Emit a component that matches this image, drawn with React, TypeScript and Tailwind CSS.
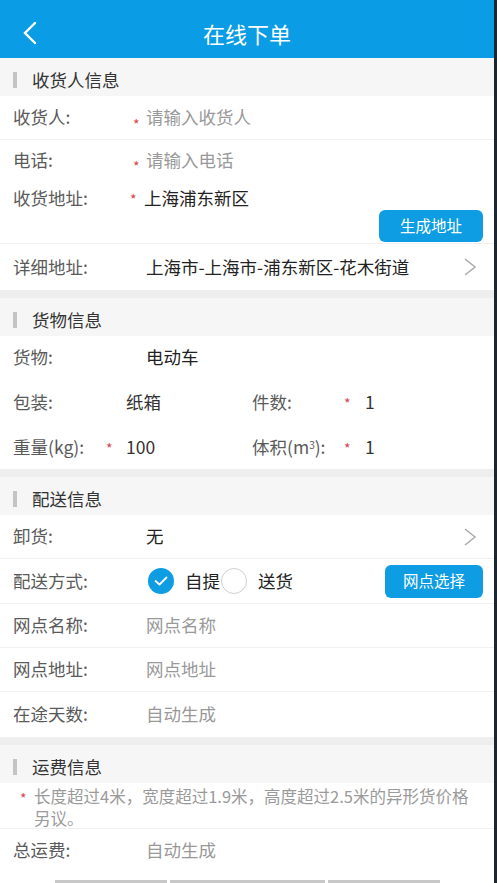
import React from "react";

const font = { fontFamily: '"Noto Sans CJK SC", "Noto Sans", sans-serif' };

const LABEL = "text-[17.5px] text-[#5a5a5a] shrink-0";
const VALUE = "text-[17.5px] text-[#222]";
const HINT = "text-[17.5px] text-[#999]";

function Star({ className = "" }: { className?: string }) {
  return <span className={`text-[#d9434e] text-[14px] leading-none shrink-0 ${className}`}>*</span>;
}

function SectionHeader({ title, gap = true }: { title: string; gap?: boolean }) {
  return (
    <div className="flex flex-col shrink-0">
      {gap && <div className="h-[8px] bg-[#eeeeee]" />}
      <div className="h-[38px] bg-[#f6f6f6] flex items-center pl-[13px] pt-[6px]">
        <div className="w-[4px] h-[16px] bg-[#c4c4c4]" />
        <span className="ml-[15px] text-[17.5px] text-[#333]">{title}</span>
      </div>
    </div>
  );
}

function Chevron() {
  return (
    <svg width="14" height="20" viewBox="0 0 14 20" className="ml-auto mr-[17px] shrink-0">
      <path d="M2 2 L12 10 L2 18" fill="none" stroke="#aaaaaa" strokeWidth="1.5" />
    </svg>
  );
}

function Divider() {
  return <div className="h-px bg-[#f0f0f0] shrink-0" />;
}

function Row({ h, children }: { h: string; children: React.ReactNode }) {
  return <div className={`${h} flex items-center pl-[13px] shrink-0`}>{children}</div>;
}

export default function App() {
  return (
    <div className="flex w-[497px] h-[883px] overflow-hidden bg-white" style={font}>
      <div className="w-[494px] flex flex-col">
        {/* Top bar */}
        <div className="h-[58px] bg-[#0a9ce5] flex items-center pt-[8px] shrink-0">
          <div className="w-[60px] pl-[21px] flex items-center">
            <svg width="18" height="24" viewBox="0 0 18 24">
              <path d="M14 2 L4 12 L14 22" fill="none" stroke="#ffffff" strokeWidth="2.4" strokeLinecap="round" />
            </svg>
          </div>
          <span className="flex-1 text-center text-white text-[22px]">在线下单</span>
          <div className="w-[60px]" />
        </div>

        {/* 收货人信息 */}
        <SectionHeader title="收货人信息" gap={false} />
        <Row h="h-[43px]">
          <span className={`${LABEL} w-[120px]`}>收货人:</span>
          <Star className="w-[13px] mt-[12px]" />
          <span className={HINT}>请输入收货人</span>
        </Row>
        <Divider />
        <Row h="h-[40px]">
          <span className={`${LABEL} w-[120px]`}>电话:</span>
          <Star className="w-[13px] mt-[12px]" />
          <span className={HINT}>请输入电话</span>
        </Row>
        <div className="h-[63px] flex flex-col shrink-0">
          <div className="flex items-center pl-[13px] h-[36px]">
            <span className={`${LABEL} w-[117px]`}>收货地址:</span>
            <Star className="w-[14px] mt-[2px]" />
            <span className={VALUE}>上海浦东新区</span>
          </div>
          <div className="flex justify-end pr-[11px] mt-[-6px]">
            <div className="w-[104px] h-[32px] bg-[#0e9de2] rounded-[6px] flex items-center justify-center">
              <span className="text-white text-[15.5px]">生成地址</span>
            </div>
          </div>
        </div>
        <Divider />
        <Row h="h-[46px]">
          <span className={`${LABEL} w-[133px]`}>详细地址:</span>
          <span className={VALUE}>上海市-上海市-浦东新区-花木街道</span>
          <Chevron />
        </Row>

        {/* 货物信息 */}
        <SectionHeader title="货物信息" />
        <Row h="h-[43px]">
          <span className={`${LABEL} w-[133px]`}>货物:</span>
          <span className={VALUE}>电动车</span>
        </Row>
        <Row h="h-[46px]">
          <span className={`${LABEL} w-[113px]`}>包装:</span>
          <span className={`${VALUE} text-[#333] w-[126px]`}>纸箱</span>
          <span className={`${LABEL} w-[92px]`}>件数:</span>
          <Star className="w-[21px] mt-[2px]" />
          <span className={`${VALUE} text-[#333]`}>1</span>
        </Row>
        <Row h="h-[44px]">
          <span className={`${LABEL} w-[93px]`}>重量(kg):</span>
          <Star className="w-[20px] mt-[2px]" />
          <span className={`${VALUE} text-[#333] w-[126px]`}>100</span>
          <span className={`${LABEL} w-[92px]`}>
            体积(m<sup className="text-[10px]">3</sup>):
          </span>
          <Star className="w-[21px] mt-[2px]" />
          <span className={`${VALUE} text-[#333]`}>1</span>
        </Row>

        {/* 配送信息 */}
        <SectionHeader title="配送信息" />
        <Row h="h-[43px]">
          <span className={`${LABEL} w-[133px]`}>卸货:</span>
          <span className={VALUE}>无</span>
          <Chevron />
        </Row>
        <Divider />
        <Row h="h-[44px]">
          <span className={`${LABEL} w-[135px]`}>配送方式:</span>
          <div className="w-[26px] h-[26px] rounded-full bg-[#0e9de2] flex items-center justify-center shrink-0">
            <svg width="14" height="10" viewBox="0 0 14 10">
              <path d="M1.5 5 L5.5 8.5 L12.5 1.5" fill="none" stroke="#ffffff" strokeWidth="1.8" strokeLinecap="round" strokeLinejoin="round" />
            </svg>
          </div>
          <span className={`${VALUE} ml-[11px]`}>自提</span>
          <div className="w-[26px] h-[26px] rounded-full border border-[#cfcfcf] bg-white ml-[1px] shrink-0" />
          <span className={`${VALUE} ml-[11px]`}>送货</span>
          <div className="ml-auto mr-[11px] w-[98px] h-[33px] bg-[#0e9de2] rounded-[6px] flex items-center justify-center">
            <span className="text-white text-[15.5px]">网点选择</span>
          </div>
        </Row>
        <Divider />
        <Row h="h-[43px]">
          <span className={`${LABEL} w-[133px]`}>网点名称:</span>
          <span className={HINT}>网点名称</span>
        </Row>
        <Divider />
        <Row h="h-[43px]">
          <span className={`${LABEL} w-[133px]`}>网点地址:</span>
          <span className={HINT}>网点地址</span>
        </Row>
        <Divider />
        <Row h="h-[45px]">
          <span className={`${LABEL} w-[133px]`}>在途天数:</span>
          <span className={HINT}>自动生成</span>
        </Row>

        {/* 运费信息 */}
        <SectionHeader title="运费信息" />
        <div className="flex pl-[20px] pr-[22px] pt-[2px] h-[45px] shrink-0">
          <Star className="w-[14px] mt-[6px]" />
          <p className="text-[16.5px] leading-[22px] text-[#9a9a9a]">
            长度超过4米，宽度超过1.9米，高度超过2.5米的异形货价格另议。
          </p>
        </div>
        <Divider />
        <Row h="h-[43px]">
          <span className={`${LABEL} w-[133px]`}>总运费:</span>
          <span className={HINT}>自动生成</span>
        </Row>
        <div className="flex-1 flex items-end pl-[55px] gap-[3px]">
          <div className="w-[112px] h-[3px] bg-[#c8c8c8]" />
          <div className="w-[155px] h-[3px] bg-[#c8c8c8]" />
          <div className="w-[112px] h-[3px] bg-[#c8c8c8]" />
        </div>
      </div>
      <div className="w-[3px] bg-[#1b2631]" />
    </div>
  );
}
